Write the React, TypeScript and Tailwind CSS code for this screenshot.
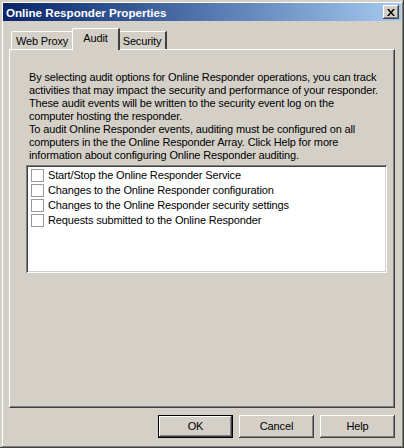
import React from 'react';

const raised = 'shadow-[inset_-1px_-1px_#404040,inset_1px_1px_#ffffff,inset_-2px_-2px_#808080]';

const items = [
  'Start/Stop the Online Responder Service',
  'Changes to the Online Responder configuration',
  'Changes to the Online Responder security settings',
  'Requests submitted to the Online Responder',
];

const lines = [
  'By selecting audit options for Online Responder operations, you can track',
  'activities that may impact the security and performance of your responder.',
  'These audit events will be written to the security event log on the',
  'computer hosting the responder.',
  'To audit Online Responder events, auditing must be configured on all',
  'computers in the the Online Responder Array. Click Help for more',
  'information about configuring Online Responder auditing.',
];

function Tab({ label, selected, w }: { label: string; selected?: boolean; w: string }) {
  if (selected) {
    return (
      <div className={`relative z-10 -mx-[2px] -mb-[1px] h-[22px] ${w} bg-[#d4d0c8] border-t border-l border-white border-r-2 border-r-[#404040] rounded-tl-[2px] flex justify-center pt-[3px] leading-[13px]`}>
        {label}
      </div>
    );
  }
  return (
    <div className={`h-[18px] ${w} border-t border-l border-white border-r-2 border-r-[#404040] rounded-tl-[2px] flex justify-center pt-[3px] leading-[13px]`}>
      {label}
    </div>
  );
}

function Button({ label, isDefault }: { label: string; isDefault?: boolean }) {
  return (
    <div className={`w-[75px] h-[23px] flex items-center justify-center ${isDefault ? 'border border-black' : ''}`}>
      <div className={`w-full h-full flex items-center justify-center ${raised}`}>{label}</div>
    </div>
  );
}

export default function App() {
  return (
    <div
      className="w-[404px] h-[448px] bg-[#d4d0c8] p-[3px] flex flex-col text-[11px] tracking-[-0.15px] text-black shadow-[inset_-1px_-1px_#404040,inset_2px_2px_#d4d0c8,inset_-2px_-2px_#808080,inset_3px_3px_#ffffff]"
      style={{ fontFamily: '"Liberation Sans", Arial, sans-serif' }}
    >
      {/* title bar */}
      <div className="h-[18px] bg-gradient-to-r from-[#0a246a] to-[#a6caf0] flex items-center justify-between pl-[3px] pr-[2px]">
        <span className="text-white font-bold text-[11.6px] tracking-normal leading-[13px]">Online Responder Properties</span>
        <div className={`w-[16px] h-[14px] bg-[#d4d0c8] flex items-center justify-center ${raised}`}>
          <svg width="8" height="7" viewBox="0 0 8 7">
            <path d="M0 0h2l2 2.5L6 0h2L5 3.5 8 7H6L4 4.5 2 7H0l3-3.5z" fill="#000" />
          </svg>
        </div>
      </div>

      {/* tabs */}
      <div className="mt-[7px] ml-[8px] flex items-end h-[21px]">
        <Tab label="Web Proxy" w="w-[63px]" />
        <Tab label="Audit" w="w-[48px]" selected />
        <Tab label="Security" w="w-[49px]" />
      </div>

      {/* panel */}
      <div className="mx-[6px] h-[359px] border border-t-white border-l-white border-r-[#404040] border-b-[#404040] shadow-[inset_-1px_-1px_#808080] px-[16px] pt-[21px]">
        <div className="pl-[3px] leading-[13px]">
          {lines.map((l) => (
            <div key={l} className="whitespace-nowrap">{l}</div>
          ))}
        </div>
        <div className="mt-[3px] w-[361px] h-[108px] bg-white shadow-[inset_1px_1px_#808080,inset_-1px_-1px_#ffffff,inset_2px_2px_#404040,inset_-2px_-2px_#d4d0c8] pt-[3px] pl-[5px]">
          {items.map((it) => (
            <div key={it} className="h-[15px] flex items-center gap-[4px]">
              <div className="w-[13px] h-[13px] border border-[#999999] bg-white" />
              <span className="leading-[13px] whitespace-nowrap">{it}</span>
            </div>
          ))}
        </div>
      </div>

      {/* buttons */}
      <div className="mt-[7px] mr-[6px] flex justify-end gap-[6px]">
        <Button label="OK" isDefault />
        <Button label="Cancel" />
        <Button label="Help" />
      </div>
    </div>
  );
}
